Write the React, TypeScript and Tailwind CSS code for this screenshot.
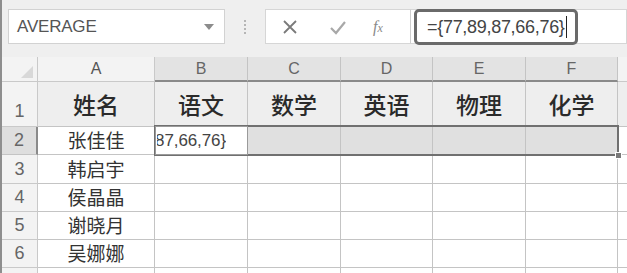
import React from "react";

const cols = [
  { k: "A", w: 117 },
  { k: "B", w: 93 },
  { k: "C", w: 93 },
  { k: "D", w: 92 },
  { k: "E", w: 93 },
  { k: "F", w: 92 },
  { k: "G", w: 40 },
];

const heads = ["姓名", "语文", "数学", "英语", "物理", "化学", ""];
const names = ["韩启宇", "侯晶晶", "谢晓月", "吴娜娜"];
const rowH = [29, 28, 28, 28];

const sans = { fontFamily: '"Liberation Sans", Arial, sans-serif' };
const cjk = { fontFamily: '"Noto Sans CJK SC", "Noto Sans", sans-serif' };

function TopBar() {
  return (
    <div className="h-[57px] bg-[#efefef] flex items-start pt-[9px]">
      <div
        className="ml-[6px] w-[217px] h-[35px] bg-white border border-[#d2d2d2] flex items-center justify-between pl-[8px] pr-[10px]"
        style={sans}
      >
        <span className="text-[17px] text-[#555] tracking-[-0.2px]">AVERAGE</span>
        <svg width="10" height="6" viewBox="0 0 10 6">
          <path d="M0 0 L10 0 L5 6 Z" fill="#8c8c8c" />
        </svg>
      </div>
      <div className="w-[40px] h-[35px] flex flex-col items-center justify-center gap-[2px]">
        <span className="w-[2px] h-[2px] bg-[#b5b5b5]" />
        <span className="w-[2px] h-[2px] bg-[#b5b5b5]" />
        <span className="w-[2px] h-[2px] bg-[#b5b5b5]" />
        <span className="w-[2px] h-[2px] bg-[#b5b5b5]" />
      </div>
      <div className="w-[146px] h-[35px] bg-white border border-[#d6d6d6] border-r-[#cfcfcf] flex items-center">
        <svg width="16" height="16" viewBox="0 0 16 16" className="ml-[16px]">
          <path d="M2 2 L14 14 M14 2 L2 14" stroke="#7a7a7a" strokeWidth="1.8" />
        </svg>
        <svg width="18" height="16" viewBox="0 0 18 16" className="ml-[31px]">
          <path d="M2 9 L7 14 L16 3" stroke="#a8a8a8" strokeWidth="2.2" fill="none" />
        </svg>
        <span
          className="ml-[26px] italic text-[#8a8a8a] text-[16px] leading-none"
          style={{ fontFamily: '"Liberation Serif", "Times New Roman", serif' }}
        >
          f<span className="text-[12px]">x</span>
        </span>
      </div>
      <div className="flex-1 h-[35px] bg-white border border-l-0 border-[#d6d6d6] pl-[3px] pt-0">
        <div
          className="w-[164px] h-[36px] -mt-[1px] border-[3px] border-[#6a6a6a] rounded-[5px] flex items-center pl-[10px]"
          style={sans}
        >
          <span className="text-[18px] text-[#444] leading-none tracking-[-0.3px]">={"{"}77,89,87,66,76{"}"}</span>
          <span className="w-[1px] h-[22px] bg-[#222] ml-[1px]" />
        </div>
      </div>
    </div>
  );
}

function Grid() {
  return (
    <div className="relative">
      {/* column header row */}
      <div className="flex h-[25px]">
        <div className="w-[36px] shrink-0 bg-[#f3f3f3] border-r border-b border-[#c9c9c9] relative">
          <svg width="12" height="12" viewBox="0 0 12 12" className="absolute right-[4px] bottom-[3px]">
            <path d="M12 0 L12 12 L0 12 Z" fill="#d8d8d8" />
          </svg>
        </div>
        {cols.map((c, i) => {
          const sel = i >= 1 && i <= 5;
          return (
            <div
              key={c.k}
              className={
                "shrink-0 flex items-center justify-center text-[16px] border-r " +
                (sel
                  ? "bg-[#e3e3e3] text-[#666] border-[#c4c4c4] border-b-2 border-b-[#8a8a8a]"
                  : "bg-[#f3f3f3] text-[#555] border-[#c9c9c9] border-b border-b-[#c9c9c9]")
              }
              style={{ width: c.w, ...sans }}
            >
              {c.k === "G" ? "" : c.k}
            </div>
          );
        })}
      </div>
      {/* row 1 */}
      <div className="flex h-[45px]">
        <div
          className="w-[36px] shrink-0 bg-[#f3f3f3] border-r border-b border-[#c9c9c9] flex items-end justify-center pb-[1px] text-[18px] text-[#666]"
          style={sans}
        >
          1
        </div>
        {cols.map((c, i) => (
          <div
            key={c.k}
            className="shrink-0 bg-[#eeeeee] border-r border-b border-[#c4c4c4] flex items-center justify-center text-[23px] text-[#2a2a2a] font-medium"
            style={{ width: c.w, ...cjk }}
          >
            {heads[i]}
          </div>
        ))}
      </div>
      {/* row 2 */}
      <div className="flex h-[28px]">
        <div
          className="w-[36px] shrink-0 bg-[#dedede] border-r-2 border-r-[#8a8a8a] border-b border-b-[#c4c4c4] flex items-center justify-center text-[18px] text-[#666]"
          style={sans}
        >
          2
        </div>
        {cols.map((c, i) => (
          <div
            key={c.k}
            className={
              "shrink-0 border-r border-b border-[#c4c4c4] flex items-center " +
              (i === 0 ? "bg-white justify-center text-[19px] text-[#333]" : i === 1 ? "bg-white" : i === 6 ? "bg-white" : "bg-[#e0e0e0]")
            }
            style={{ width: c.w, ...(i === 0 ? cjk : {}) }}
          >
            {i === 0 ? "张佳佳" : null}
            {i === 1 ? (
              <div className="w-[69px] ml-[2px] overflow-hidden flex justify-end whitespace-nowrap">
                <span className="shrink-0 text-[17px] text-[#444] tracking-[-0.1px]" style={sans}>
                  87,66,76{"}"}
                </span>
              </div>
            ) : null}
          </div>
        ))}
      </div>
      {/* rows 3-6 */}
      {names.map((n, r) => (
        <div key={n} className="flex" style={{ height: rowH[r] }}>
          <div
            className="w-[36px] shrink-0 bg-[#f3f3f3] border-r border-b border-[#c9c9c9] flex items-center justify-center text-[18px] text-[#666]"
            style={sans}
          >
            {r + 3}
          </div>
          {cols.map((c, i) => (
            <div
              key={c.k}
              className={
                "shrink-0 bg-white border-r border-b border-[#c4c4c4] flex items-center " +
                (i === 0 ? "justify-center text-[19px] text-[#333]" : "")
              }
              style={{ width: c.w, ...(i === 0 ? cjk : {}) }}
            >
              {i === 0 ? n : null}
            </div>
          ))}
        </div>
      ))}
      <div className="flex h-[10px]">
        <div className="w-[36px] shrink-0 bg-[#f3f3f3] border-r border-[#c9c9c9]" />
        {cols.map((c) => (
          <div key={c.k} className="shrink-0 bg-white border-r border-[#c4c4c4]" style={{ width: c.w }} />
        ))}
      </div>
      {/* selection overlay B2:F2 */}
      <div className="absolute left-[152px] top-[68px] w-[465px] h-[31px] border-2 border-[#707070] pointer-events-none" />
      <div className="absolute left-[153px] top-[69px] w-[93px] h-[29px] border border-[#9a9a9a] pointer-events-none" />
      <div className="absolute left-[613px] top-[95px] w-[7px] h-[7px] bg-[#7a7a7a] border border-white pointer-events-none" />
    </div>
  );
}

export default function App() {
  return (
    <div className="w-[627px] h-[273px] overflow-hidden border-l-2 border-[#8e8e8e] bg-white">
      <TopBar />
      <Grid />
    </div>
  );
}
